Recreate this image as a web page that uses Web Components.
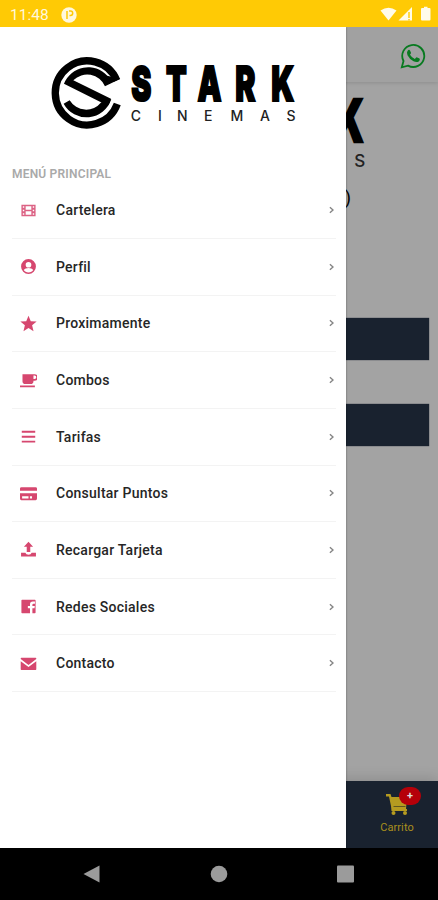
<!DOCTYPE html>
<html lang="es">

<head>
    <meta charset="UTF-8">
    <meta name="viewport" content="width=device-width, initial-scale=1.0">
    <title>Stark Cinemas</title>
    <style>
        body {
            margin: 0;
            font-family: Roboto, "Liberation Sans", sans-serif;
        }
    </style>
</head>

<body>
    <stark-app></stark-app>

    <script>
        function define(name, html) {
            const template = document.createElement('template');
            template.innerHTML = html;
            customElements.define(name, class extends HTMLElement {
                constructor() {
                    super();
                    this.attachShadow({ mode: 'open' }).appendChild(template.content.cloneNode(true));
                }
            });
        }

        // 24x24 icons for the menu
        const ICONS = {
            film: '<path fill-rule="evenodd" d="M2 4h20v16H2zM4 6v2h2V6zM4 11v2h2v-2zM4 16v2h2v-2zM18 6v2h2V6zM18 11v2h2v-2zM18 16v2h2v-2zM8 6v5h8V6zM8 13v5h8v-5z" opacity=".85"/>',
            person: '<path fill-rule="evenodd" d="M12 1.500a10.500 10.500 0 1 0 0 21a10.500 10.500 0 0 0 0-21zM12 5.500a4 4 0 1 1 0 8a4 4 0 0 1 0-8zM12 20.500c-3 0-5.400-1.500-6.700-3.500c1-2 4-3 6.700-3s5.700 1 6.700 3c-1.300 2-3.700 3.500-6.700 3.500z"/>',
            star: '<path d="M12 1l3.200 7.700l8.300.6l-6.400 5.300l2 8.200L12 18.400l-7.100 4.400l2-8.200L.5 9.300l8.300-.6z"/>',
            cafe: '<path fill-rule="evenodd" d="M3.500 3h17a4 4 0 0 1 0 9.500H19v.5a4 4 0 0 1-4 4H7.500a4 4 0 0 1-4-4zM19 5v5h1.500a2.500 2.500 0 0 0 0-5zM0 19h21v2.500H0z"/>',
            menu: '<path d="M2.500 4h19v2.600h-19zM2.500 11h19v2.600h-19zM2.500 18h19v2.600h-19z"/>',
            card: '<path fill-rule="evenodd" d="M2 3h20q2 0 2 2v3H0V5q0-2 2-2zM0 11.500h24V19q0 2.500-2 2.500H2q-2 0-2-2.500zM3 16v3h9v-3zM14 16v3h3v-3z"/>',
            upload: '<path d="M12 1l6.500 7H14.500v7.500h-5V8H5.500zM1.500 16.500h6q1 3 4.500 3t4.500-3h6V22h-21z"/>',
            facebook: '<path fill-rule="evenodd" d="M3 2.500h18q1 0 1 1v17q0 1-1 1h-3.500V14.500h3l.4-3.200h-3.400V9.500q0-1.500 1.600-1.500h2V5h-3q-4 0-4 4v2.300h-3v3.200h3v7H3q-1 0-1-1v-17q0-1 1-1z"/>',
            mail: '<path d="M2 4h20q1 0 1 1v.8L12 14L1 5.800V5q0-1 1-1zM1 8.800l11 8l11-8V20q0 1-1 1H2q-1 0-1-1z"/>'
        };

        define('stark-logo', `
            <style>
                :host { display: block; }
                svg { display: block; width: 100%; }
            </style>
            <svg viewBox="0 0 246 74">
                <!-- C ring and the S inside it -->
                <g transform="translate(36.300 37) scale(.3333)">
                    <path fill="none" stroke="#000" stroke-width="22" d="M88.400-37.500A96 96 0 1 0 90 33"/>
                    <path d="M98-42L53-20A58 58 0 0 0-42-38L71 17Q68 28 62 38L-70-28A78 78 0 0 1 60-52z"/>
                    <path d="M-71 32L-53 22A58 58 0 0 0 42 28L72 18A78 78 0 0 1-71 32z"/>
                </g>
                <text transform="translate(0 44.700) scale(.63 1)" x="127.500 182.500 232.500 292.500 349.500" font-family="Inter" font-weight="900" font-size="48" stroke="#000" stroke-width="2">STARK</text>
                <text x="79.800 107 126 153 179.500 209 235.500" y="65.300" font-family="Inter" font-weight="500" font-size="14" fill="#222">CINEMAS</text>
            </svg>
        `);

        define('status-bar', `
            <style>
                :host {
                    display: flex;
                    align-items: center;
                    justify-content: space-between;
                    box-sizing: border-box;
                    height: 27px;
                    padding: 2px 7px 0 10px;
                    background: #ffca05;
                    color: #fff8dc;
                    font-size: 15.500px;
                }
                div { display: flex; align-items: center; gap: 12px; }
                svg { display: block; }
            </style>
            <div>
                <span>11:48</span>
                <svg width="16" height="16" viewBox="0 0 16 16">
                    <circle cx="8" cy="8" r="7.700" fill="#fff8dc"/>
                    <path d="M6 12V4M8 4h1.500a2 2 0 0 1 0 4.400H8.500" fill="none" stroke="#ffca05" stroke-width="1.500"/>
                </svg>
            </div>
            <svg width="51" height="17" viewBox="0 0 51 17" fill="#fffbea">
                <path d="M.5 4.500Q8.500-1.200 16.500 4.500L8.500 14.500z"/>
                <path d="M32 1v13.500H18.500z"/>
                <path d="M29 6v6M29 13v1.500" stroke="#ffca05" stroke-width="1.400"/>
                <path d="M42 2h2V.8h3.500V2h2q1 0 1 1v10.500q0 1-1 1H42q-1 0-1-1V3q0-1 1-1z"/>
            </svg>
        `);

        define('app-backdrop', `
            <style>
                :host { display: flex; flex-direction: column; background: #a3a3a3; color: #000; }
                header {
                    display: flex;
                    align-items: center;
                    justify-content: flex-end;
                    height: 55px;
                    padding: 2px 12px 0 0;
                    box-sizing: border-box;
                    background: #a1a1a1;
                    box-shadow: 0 1px 4px rgba(0, 0, 0, .13);
                }
                main { flex: 1; display: flex; flex-direction: column; padding: 5px 9px 0; }
                stark-logo { width: 300px; margin-left: 58px; }
                p { margin: 9px 78px 0 0; text-align: right; font-size: 18px; line-height: 24px; }
                .button { height: 42px; background: #19222f; box-shadow: 0 0 1px #19222f; }
                .button + .button { margin-top: 44px; }
                p + .button { margin-top: 108px; }
                footer {
                    display: flex;
                    justify-content: flex-end;
                    height: 67px;
                    padding-right: 13px;
                    background: #19222f;
                    box-shadow: 0 -3px 12px rgba(0, 0, 0, .13);
                }
                .tab {
                    display: flex;
                    flex-direction: column;
                    align-items: center;
                    width: 56px;
                    color: #a98f1d;
                    font-size: 11px;
                    line-height: 14px;
                    letter-spacing: .1px;
                    position: relative;
                }
                .tab svg { margin: 12px 0 5px; }
                .badge {
                    position: absolute;
                    left: 30px;
                    top: 6px;
                    width: 22px;
                    height: 18px;
                    border-radius: 9px;
                    background: #b50009;
                    color: #ddd;
                    font-size: 11px;
                    font-weight: 700;
                    line-height: 18px;
                    text-align: center;
                }
            </style>
            <header>
                <svg width="26" height="26" viewBox="0 0 26 26" fill="none" stroke="#087a20" stroke-width="1.800">
                    <path d="M1.800 24.300L3.500 18A11 11 0 1 1 8 22.600z"/>
                    <path d="M7.500 8Q9 6 10 7.500l1 2.300q.2.700-1 2q1.800 3 4.800 4.200l1.400-1.600q.4-.4 1 0l2.300 1.200q.7.400 0 1.800c-1 1.800-3.500 2-6 .8q-4-2-6-6Q6.500 9.500 7.500 8z" fill="#087a20" stroke="none"/>
                </svg>
            </header>
            <main>
                <stark-logo></stark-logo>
                <p>)</p>
                <div class="button"></div>
                <div class="button"></div>
            </main>
            <footer>
                <div class="tab">
                    <svg width="24" height="23" viewBox="0 0 24 23" fill="#b59b20">
                        <path d="M1 1h4.500l1 3H22l-1 12h1v2H6.500L6 13L4 3.500H1z"/>
                        <circle cx="8.500" cy="20" r="2"/>
                        <circle cx="20" cy="20" r="2"/>
                        <path d="M8.500 13.500h12" stroke="#5f5720"/>
                    </svg>
                    <span>Carrito</span>
                    <span class="badge">+</span>
                </div>
            </footer>
        `);

        define('side-menu', `
            <style>
                :host {
                    display: block;
                    box-sizing: border-box;
                    padding: 29px 10px 0 12px;
                    background: #fff;
                    box-shadow: 0 0 2px rgba(0, 0, 0, .4);
                }
                stark-logo { width: 246px; margin-left: 39px; }
                h2 {
                    margin: 37px 0 0;
                    color: #a9a9a9;
                    font-size: 12px;
                    font-weight: 600;
                    line-height: 14px;
                    letter-spacing: .2px;
                }
                nav { margin-top: 1.400px; }
            </style>
            <stark-logo></stark-logo>
            <h2>MENÚ PRINCIPAL</h2>
            <nav><slot></slot></nav>
        `);

        class MenuItem extends HTMLElement {
            constructor() {
                super();
                this.attachShadow({ mode: 'open' });
            }

            connectedCallback() {
                this.shadowRoot.innerHTML = `
                    <style>
                        :host {
                            display: flex;
                            align-items: center;
                            box-sizing: border-box;
                            height: 56.640px;
                            padding: 0 2px 0 8px;
                            border-bottom: 1px solid #f3f3f3;
                            color: #262626;
                            font-size: 14px;
                            font-weight: 500;
                            letter-spacing: .24px;
                        }
                        .icon { width: 17px; height: 17px; margin-right: 19px; fill: #d6476f; }
                        .label { flex: 1; }
                        .arrow { width: 5px; height: 8px; fill: none; stroke: #858585; stroke-width: 1.400; }
                    </style>
                    <svg class="icon" viewBox="0 0 24 24">${ICONS[this.getAttribute('icon')]}</svg>
                    <span class="label"><slot></slot></span>
                    <svg class="arrow" viewBox="0 0 5 8"><path d="M.9 1.200L4 4L.9 6.800"/></svg>
                `;
            }
        }
        customElements.define('menu-item', MenuItem);

        define('nav-bar', `
            <style>
                :host {
                    display: flex;
                    justify-content: center;
                    align-items: center;
                    gap: 109px;
                    height: 52px;
                    background: #000;
                }
                svg { display: block; width: 18px; height: 18px; fill: #9b9b9b; }
            </style>
            <svg viewBox="0 0 18 18"><path d="M.500 9L16.500 .500v17z"/></svg>
            <svg viewBox="0 0 18 18"><circle cx="9" cy="9" r="8.300"/></svg>
            <svg viewBox="0 0 18 18"><rect x="0" y=".500" width="17" height="17" rx="1"/></svg>
        `);

        define('stark-app', `
            <style>
                :host { display: grid; grid-template-rows: 27px 821px 52px; width: 438px; height: 900px; overflow: hidden; }
                /* the drawer shares the grid cell with the page it covers */
                .stage { display: grid; grid-template-columns: 346px 92px; overflow: hidden; }
                app-backdrop { grid-area: 1 / 1 / 2 / 3; min-width: 0; }
                side-menu { grid-area: 1 / 1; z-index: 1; }
            </style>
            <status-bar></status-bar>
            <div class="stage">
                <app-backdrop></app-backdrop>
                <side-menu>
                    <menu-item icon="film">Cartelera</menu-item>
                    <menu-item icon="person">Perfil</menu-item>
                    <menu-item icon="star">Proximamente</menu-item>
                    <menu-item icon="cafe">Combos</menu-item>
                    <menu-item icon="menu">Tarifas</menu-item>
                    <menu-item icon="card">Consultar Puntos</menu-item>
                    <menu-item icon="upload">Recargar Tarjeta</menu-item>
                    <menu-item icon="facebook">Redes Sociales</menu-item>
                    <menu-item icon="mail">Contacto</menu-item>
                </side-menu>
            </div>
            <nav-bar></nav-bar>
        `);
    </script>
</body>

</html>
